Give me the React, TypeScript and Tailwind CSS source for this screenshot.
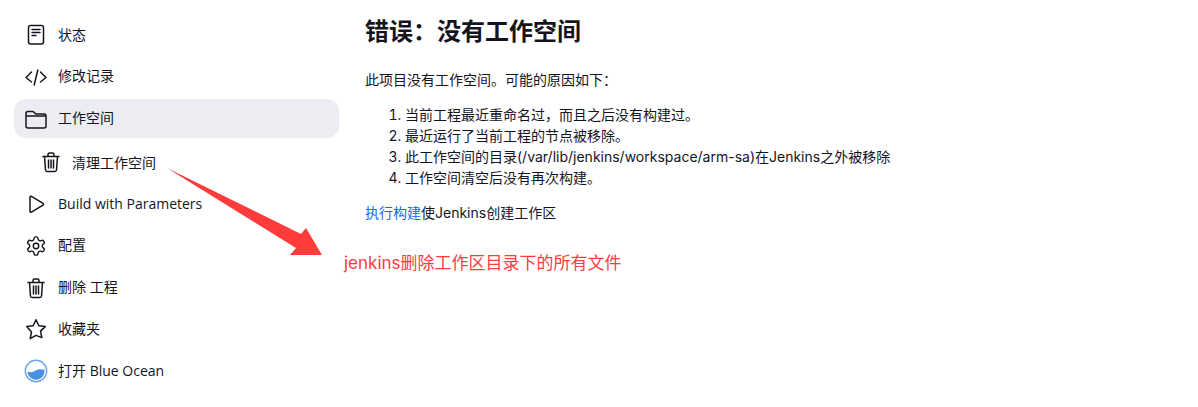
import React from "react";

const FONT = "font-['Open_Sans','Noto_Sans_CJK_SC',sans-serif]";

const stroke = { fill: "none", stroke: "#14141f", strokeWidth: 1.5, strokeLinecap: "round", strokeLinejoin: "round" } as const;

const Doc = () => (
  <svg width="22" height="22" viewBox="0 0 22 22" {...stroke}>
    <rect x="3.500" y="1.500" width="15" height="18.500" rx="2" />
    <path d="M7 5.500h8M7 8.500h8M7 11.500h4" />
  </svg>
);
const Code = () => (
  <svg width="22" height="22" viewBox="0 0 22 22" {...stroke}>
    <path d="M6.500 6 1 11.500 6.500 16M15.500 6 21 11.500 15.500 16M12.800 4 9.200 19" />
  </svg>
);
const Folder = () => (
  <svg width="22" height="22" viewBox="0 0 22 22" {...stroke}>
    <path d="M1 5.500C1 4 1.800 3.500 3 3.500h4.500c1 0 1.500.5 2 1.200.5.700 1 1.300 2 1.300H19c1.300 0 2 .8 2 2V18c0 1.200-.7 2-2 2H3c-1.300 0-2-.8-2-2zM1 8h20" />
  </svg>
);
const Trash = () => (
  <svg width="22" height="22" viewBox="0 0 22 22" {...stroke}>
    <path d="M3 5.500h16M8 5.500V3.500c0-.8.500-1.500 1.500-1.500h3c1 0 1.500.7 1.500 1.500v2M4.500 5.500l1 13.500c.1.800.7 1.500 1.500 1.500h8c.8 0 1.400-.7 1.500-1.500l1-13.500M8.500 9v8M11 9v8M13.500 9v8" />
  </svg>
);
const Play = () => (
  <svg width="22" height="22" viewBox="0 0 22 22" {...stroke}>
    <path d="M5 4.200c0-.9.800-1.300 1.500-.9l11.500 7c.7.400.7 1.400 0 1.800l-11.500 7c-.7.400-1.500 0-1.500-.9z" />
  </svg>
);
const Gear = () => (
  <svg width="22" height="22" viewBox="0 0 24 24" {...stroke}>
    <path d="M12.220 2h-.44a2 2 0 0 0-2 2v.18a2 2 0 0 1-1 1.730l-.43.25a2 2 0 0 1-2 0l-.15-.08a2 2 0 0 0-2.730.73l-.22.38a2 2 0 0 0 .73 2.730l.15.100a2 2 0 0 1 1 1.720v.510a2 2 0 0 1-1 1.740l-.15.090a2 2 0 0 0-.73 2.730l.22.380a2 2 0 0 0 2.730.730l.15-.080a2 2 0 0 1 2 0l.43.250a2 2 0 0 1 1 1.730V20a2 2 0 0 0 2 2h.44a2 2 0 0 0 2-2v-.18a2 2 0 0 1 1-1.730l.43-.25a2 2 0 0 1 2 0l.15.080a2 2 0 0 0 2.730-.730l.22-.390a2 2 0 0 0-.73-2.730l-.15-.080a2 2 0 0 1-1-1.740v-.500a2 2 0 0 1 1-1.740l.15-.090a2 2 0 0 0 .73-2.730l-.22-.380a2 2 0 0 0-2.730-.730l-.15.080a2 2 0 0 1-2 0l-.43-.250a2 2 0 0 1-1-1.730V4a2 2 0 0 0-2-2z" />
    <circle cx="12" cy="12" r="3" />
  </svg>
);
const Star = () => (
  <svg width="22" height="22" viewBox="0 0 22 22" {...stroke}>
    <path d="M11 1.800l2.800 6 6.500.8-4.800 4.500 1.300 6.500L11 17.400l-5.800 3.200 1.300-6.500L1.700 8.600l6.500-.8z" />
  </svg>
);
const Ocean = () => (
  <svg width="24" height="24" viewBox="0 0 24 24" className="mx-[-1px] shrink-0">
    <circle cx="12" cy="12" r="10.700" fill="none" stroke="#6ea6e8" strokeWidth="1.500" />
    <path d="M3.500 12.500c2.500 1 4.500.8 7-.6 3-1.700 6.300-2.300 10-1 .6 5.300-3.500 9.800-8.500 9.800-4.700 0-8.500-3.700-8.500-8.200z" fill="#4a90e2" />
  </svg>
);

function Item({ icon, label, active }: { icon: React.ReactNode; label: string; active?: boolean }) {
  return (
    <div className={`flex h-[39px] items-center gap-[11px] rounded-[12px] pl-[11px] ${active ? "bg-[#ecedf2]" : ""}`}>
      {icon}
      <span className="-translate-y-px">{label}</span>
    </div>
  );
}

export default function App() {
  return (
    <div className={`${FONT} relative flex h-[407px] w-[1198px] overflow-hidden bg-white text-[14px] leading-[21px] text-[#14141f]`}>
      <aside className="ml-[14px] flex w-[325px] shrink-0 flex-col gap-[2.750px] pt-[15.500px]">
        <Item icon={<Doc />} label="状态" />
        <Item icon={<Code />} label="修改记录" />
        <Item icon={<Folder />} label="工作空间" active />
        <div className="mt-[2px] flex h-[39px] items-center gap-[11px] pl-[26px]">
          <Trash />
          <span className="ml-[-1px]">清理工作空间</span>
        </div>
        <Item icon={<Play />} label="Build with Parameters" />
        <Item icon={<Gear />} label="配置" />
        <Item icon={<Trash />} label="删除 工程" />
        <Item icon={<Star />} label="收藏夹" />
        <Item icon={<Ocean />} label="打开 Blue Ocean" />
      </aside>
      <main className="ml-[26px] pt-[14px] font-['Inter','Noto_Sans_CJK_SC',sans-serif]">
        <h1 className="text-[24px] font-bold leading-[36px]">{"错误\uFF1A没有工作空间"}</h1>
        <p className="mt-[19px]">{"此项目没有工作空间。可能的原因如下\uFF1A"}</p>
        <ol className="mt-[14px] list-decimal pl-[40px]">
          <li>{"当前工程最近重命名过\uFF0C而且之后没有构建过。"}</li>
          <li>最近运行了当前工程的节点被移除。</li>
          <li>此工作空间的目录(/var/lib/jenkins/workspace/arm-sa)在Jenkins之外被移除</li>
          <li>工作空间清空后没有再次构建。</li>
        </ol>
        <p className="mt-[14px]">
          <span className="text-[#0b6cf5]">执行构建</span>使Jenkins创建工作区
        </p>
      </main>
      <svg className="absolute left-0 top-0" width="1198" height="407" viewBox="0 0 1198 407">
        <polygon points="167,168 301,234 306,228 322,255 290,255 296,248" fill="#fe3c3c" />
      </svg>
      <span className="absolute left-[344px] top-[251px] font-['Inter','Noto_Sans_CJK_SC',sans-serif] text-[17px] leading-[25px] text-[#fe3c3c]">jenkins删除工作区目录下的所有文件</span>
    </div>
  );
}
